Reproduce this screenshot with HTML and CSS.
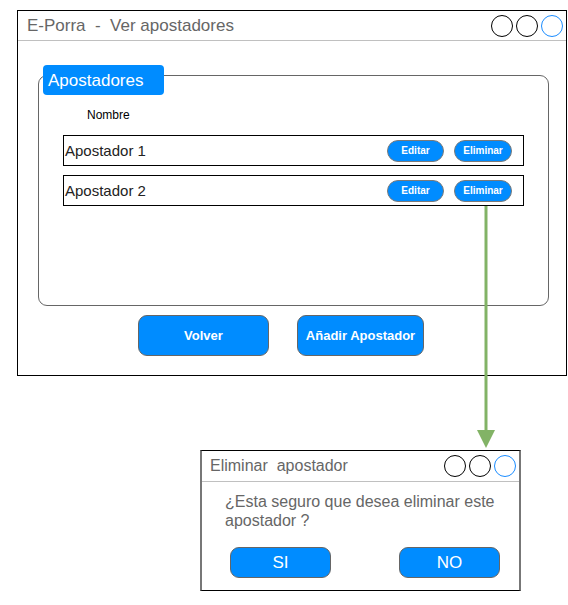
FILE: index.html
```html
<!DOCTYPE html>
<html lang="es">
<head>
<meta charset="utf-8">
<title>E-Porra - Ver apostadores</title>
<link rel="stylesheet" href="styles.css">
</head>
<body>
<div class="canvas">
  <div class="window">
    <div class="titlebar">
      <span class="title">E-Porra  -  Ver apostadores</span>
      <div class="dots"><span class="dot"></span><span class="dot"></span><span class="dot blue"></span></div>
    </div>
    <div class="group">
      <div class="legend">Apostadores</div>
      <div class="colhead">Nombre</div>
      <div class="row">
        <span class="name">Apostador 1</span>
        <div class="actions"><span class="pill edit">Editar</span><span class="pill del">Eliminar</span></div>
      </div>
      <div class="row">
        <span class="name">Apostador 2</span>
        <div class="actions"><span class="pill edit">Editar</span><span class="pill del">Eliminar</span></div>
      </div>
    </div>
    <div class="bottom">
      <span class="bigbtn volver">Volver</span>
      <span class="bigbtn add">Añadir Apostador</span>
    </div>
  </div>

  <svg class="arrow" width="30" height="250" viewBox="0 0 30 250">
    <line x1="15" y1="0" x2="15" y2="228" stroke="#82b366" stroke-width="3"/>
    <polygon points="6,224 24,224 15,242" fill="#82b366"/>
  </svg>

  <div class="dialog">
    <div class="dtitlebar">
      <span class="dtitle">Eliminar  apostador</span>
      <div class="dots"><span class="dot"></span><span class="dot"></span><span class="dot blue"></span></div>
    </div>
    <p class="question">¿Esta seguro que desea eliminar este apostador ?</p>
    <div class="dbuttons">
      <span class="dbtn">SI</span>
      <span class="dbtn">NO</span>
    </div>
  </div>
</div>
</body>
</html>
```

FILE: styles.css
```css
* { box-sizing: border-box; }
html, body { margin: 0; padding: 0; background: #fff; }
body { font-family: "Liberation Sans", Arial, sans-serif; }

.canvas { position: relative; width: 568px; height: 605px; overflow: hidden; }

.window {
  margin: 10px 0 0 17px;
  width: 550px;
  height: 366px;
  border: 1px solid #000;
}

.titlebar {
  height: 30px;
  border-bottom: 1px solid #c0c0c0;
  display: flex;
  align-items: center;
  justify-content: space-between;
  padding: 0 3px 0 9px;
}
.title { font-size: 17px; color: #666; white-space: pre; }

.dots { display: flex; gap: 3px; }
.dot {
  width: 22px; height: 22px;
  border: 1px solid #000;
  border-radius: 50%;
  display: block;
}
.dot.blue { border-color: #1a8cff; }

.group {
  position: relative;
  margin: 34px 0 0 20px;
  width: 511px;
  height: 231px;
  border: 1px solid #666;
  border-radius: 9px;
  padding: 32px 0 0 24px;
}
.legend {
  position: absolute;
  left: 4px; top: -11px;
  width: 121px; height: 30px;
  background: #008cff;
  color: #fff;
  font-size: 17px;
  border-radius: 4px;
  padding: 6px 0 0 5px;
  line-height: 20px;
}
.colhead { font-size: 12px; color: #000; line-height: 14px; margin: 0 0 13px 24px; }

.row {
  width: 461px;
  height: 31px;
  border: 1px solid #000;
  display: flex;
  align-items: center;
  justify-content: space-between;
  padding: 0 11px 0 1px;
  margin-bottom: 9px;
}
.name { font-size: 15px; color: #222; }
.actions { display: flex; gap: 10px; }
.pill {
  height: 22px;
  border-radius: 11px;
  background: #008cff;
  border: 1px solid #7a7a7a;
  color: #fff;
  font-size: 10px;
  font-weight: bold;
  display: flex; align-items: center; justify-content: center;
}
.pill.edit { width: 57px; }
.pill.del { width: 58px; }

.bottom { display: flex; gap: 28px; margin: 9px 0 0 120px; }
.bigbtn {
  height: 41px;
  border-radius: 9px;
  background: #008cff;
  border: 1px solid #666;
  color: #fff;
  font-size: 13px;
  font-weight: bold;
  display: flex; align-items: center; justify-content: center;
}
.volver { width: 131px; }
.add { width: 127px; }

.arrow { position: absolute; left: 471px; top: 206px; }

.dialog {
  position: absolute;
  left: 200px; top: 450px;
  width: 321px; height: 141px;
  border: 1px solid #000;
  border-left: 2px solid #777;
  border-right: 2px solid #777;
}
.dtitlebar {
  height: 31px;
  border-bottom: 1px solid #c0c0c0;
  display: flex;
  align-items: center;
  justify-content: space-between;
  padding: 0 3px 0 8px;
}
.dtitle { font-size: 16px; color: #666; white-space: pre; }
.question {
  margin: 10px 0 0 23px;
  width: 285px;
  font-size: 16px;
  line-height: 19px;
  color: #666;
}
.dbuttons { display: flex; gap: 68px; margin: 17px 0 0 28px; }
.dbtn {
  width: 101px; height: 31px;
  border-radius: 9px;
  background: #008cff;
  border: 1px solid #666;
  color: #fff;
  font-size: 17px;
  display: flex; align-items: center; justify-content: center;
}
```
